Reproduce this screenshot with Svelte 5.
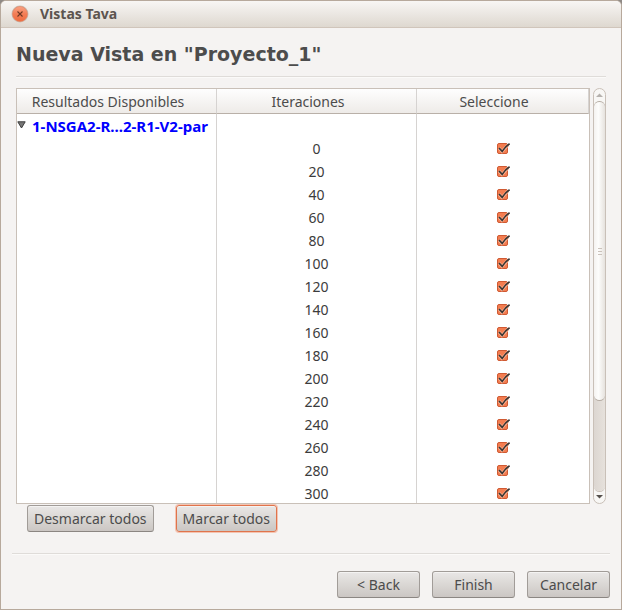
<script>
  let rows = $state(
    Array.from({ length: 16 }, (_, i) => ({ iteration: i * 20, selected: true }))
  );
  let expanded = $state(true);

  function setAll(value) {
    for (const row of rows) row.selected = value;
  }
</script>

<div class="window">
  <header class="titlebar">
    <button class="close" aria-label="Cerrar">
      <svg width="18" height="18" viewBox="0 0 18 18" aria-hidden="true">
        <defs>
          <linearGradient id="close-fill" x1="0" y1="0" x2="0" y2="1">
            <stop offset="0" stop-color="#f9a384" />
            <stop offset="0.5" stop-color="#f37d55" />
            <stop offset="1" stop-color="#ee6c40" />
          </linearGradient>
        </defs>
        <circle cx="9" cy="9" r="8.5" fill="#c9bfb4" />
        <circle cx="9" cy="9" r="7.5" fill="url(#close-fill)" stroke="#e58260" stroke-width="0.6" />
        <path d="M6.5 6.5 L11.5 11.5 M11.5 6.5 L6.5 11.5" stroke="#6e3824" stroke-width="1.1" />
      </svg>
    </button>
    <span class="caption">Vistas Tava</span>
  </header>

  <main>
    <h1>Nueva Vista en "Proyecto_1"</h1>
    <hr />

    <div class="results">
      <div class="viewport">
        <table>
          <colgroup>
            <col class="wide" />
            <col class="wide" />
            <col />
          </colgroup>
          <thead>
            <tr>
              <th scope="col">Resultados Disponibles</th>
              <th scope="col">Iteraciones</th>
              <th scope="col">Seleccione</th>
            </tr>
          </thead>
          <tbody>
            <tr>
              <td class="group">
                <button class="toggle" aria-expanded={expanded} onclick={() => (expanded = !expanded)}>
                  <svg class="arrow" width="9" height="8" viewBox="0 0 9 8" aria-hidden="true">
                    <path d="M0.8 0.8 H8.2 L4.5 7 Z" fill="#777" stroke="#3c3c3c" stroke-width="1" />
                  </svg>
                  <span>1-NSGA2-R...2-R1-V2-par</span>
                </button>
              </td>
              <td></td>
              <td></td>
            </tr>
            {#if expanded}
              {#each rows as row (row.iteration)}
                <tr>
                  <td></td>
                  <td>{row.iteration}</td>
                  <td>
                    <label class="check">
                      <input type="checkbox" bind:checked={row.selected} aria-label={`Iteración ${row.iteration}`} />
                      {#if row.selected}
                        <svg width="14" height="12" viewBox="0 0 14 12" aria-hidden="true">
                          <path d="M2 5 L5 8.4 L11 2" fill="none" stroke="#f9b396" stroke-width="3" />
                          <path d="M2 5 L5.2 8.4 C7 5.6 9.4 2.8 12.6 0.8" fill="none" stroke="#3a3532" stroke-width="1.7" />
                        </svg>
                      {/if}
                    </label>
                  </td>
                </tr>
              {/each}
            {/if}
          </tbody>
        </table>
      </div>

      <div class="scrollbar">
        <button class="step" aria-label="Subir">
          <svg width="7" height="4" viewBox="0 0 7 4" aria-hidden="true"><path d="M0 4 L3.5 0.5 L7 4 Z" fill="#b5b1ad" /></svg>
        </button>
        <div class="track">
          <div class="thumb"><i></i><i></i><i></i></div>
        </div>
        <button class="step down" aria-label="Bajar">
          <svg width="7" height="4" viewBox="0 0 7 4" aria-hidden="true"><path d="M0 0 H7 L3.5 3.5 Z" fill="#55504c" /></svg>
        </button>
      </div>
    </div>

    <div class="marks">
      <button class="btn" onclick={() => setAll(false)}>Desmarcar todos</button>
      <button class="btn active" onclick={() => setAll(true)}>Marcar todos</button>
    </div>
  </main>

  <footer>
    <hr />
    <div class="actions">
      <button class="btn">&lt; Back</button>
      <button class="btn">Finish</button>
      <button class="btn">Cancelar</button>
    </div>
  </footer>
</div>

<style>
  :global(body) {
    margin: 0;
    background: #8f8a86;
  }

  .window {
    box-sizing: border-box;
    height: 100vh;
    display: flex;
    flex-direction: column;
    border: 1px solid #b7a99c;
    border-radius: 6px 6px 0 0;
    overflow: hidden;
    background: #f5f3f2;
    color: #4c4c4c;
    font: 14px/20px "Noto Sans", "Open Sans", sans-serif;
  }

  button {
    font: inherit;
    color: inherit;
  }

  .titlebar {
    height: 26px;
    flex: none;
    display: flex;
    align-items: center;
    gap: 11px;
    padding-left: 10px;
    border-bottom: 1px solid #d0c5bb;
    background: linear-gradient(#f8f6f4, #ded8d0);
  }

  .close {
    display: flex;
    padding: 0;
    border: 0;
    background: none;
  }

  .caption {
    font-weight: 700;
    color: #5c544f;
  }

  main {
    flex: 1;
    min-height: 0;
    display: flex;
    flex-direction: column;
    padding: 0 15px;
  }

  h1 {
    margin: 14px 0 10px;
    font: 700 19px/24px "DejaVu Sans", sans-serif;
  }

  hr {
    width: 100%;
    flex: none;
    margin: 0;
    border: 0;
    border-top: 1px solid #dfdcd9;
    border-bottom: 1px solid #fbfaf9;
  }

  .results {
    flex: 1;
    min-height: 0;
    display: flex;
    gap: 3px;
    margin-top: 10px;
  }

  .viewport {
    flex: 1;
    overflow: hidden;
    border: 1px solid #c9c0b8;
    background: #fff;
  }

  table {
    width: 100%;
    table-layout: fixed;
    border-collapse: separate;
    border-spacing: 0;
  }

  .wide {
    width: 200px;
  }

  th,
  td {
    box-sizing: border-box;
    padding: 0;
    text-align: center;
    border-right: 1px solid #d6d3d1;
  }

  td:last-child {
    border-right: 0;
  }

  th {
    height: 25px;
    padding: 2px 17px 0 0;
    font-weight: 400;
    border-bottom: 1px solid #b9b0a8;
    background: linear-gradient(#fefefe, #eeebe8);
  }

  td {
    height: 23px;
    color: #3c3c3c;
  }

  .toggle {
    display: flex;
    gap: 6px;
    padding: 0;
    border: 0;
    background: none;
    color: #0000ff;
    font-size: 15px;
    font-weight: 700;
    white-space: nowrap;
  }

  .arrow {
    margin-top: 5px;
  }

  .check {
    display: grid;
    justify-content: center;
    justify-items: start;
    grid-template-columns: 12px;
  }

  .check input,
  .check svg {
    grid-area: 1 / 1;
  }

  .check input {
    appearance: none;
    width: 11px;
    height: 11px;
    margin: 0;
    border: 1px solid #b9a99e;
    border-radius: 2px;
    background: #fff;
  }

  .check input:checked {
    border-color: #cf5a33;
    background: #f37d50;
  }

  .check svg {
    pointer-events: none;
  }

  .scrollbar {
    box-sizing: border-box;
    width: 13px;
    display: flex;
    flex-direction: column;
    border: 1px solid #c9c0b8;
    border-radius: 7px;
    overflow: hidden;
    background: #f8f7f5;
  }

  .step {
    height: 12px;
    flex: none;
    display: flex;
    align-items: center;
    justify-content: center;
    padding: 0;
    border: 0;
    background: none;
  }

  .track {
    flex: 1;
    border-radius: 6px;
    background: linear-gradient(90deg, #dcd6d1, #e6e1dc);
    box-shadow: 0 1px 0 #c9c0b8;
  }

  .thumb {
    box-sizing: border-box;
    height: 77%;
    display: flex;
    flex-direction: column;
    align-items: center;
    justify-content: center;
    gap: 2px;
    border: solid #b5aca4;
    border-width: 1px 0;
    border-radius: 6px;
    background: linear-gradient(90deg, #f4f2f0, #fdfdfc 40%, #e6e2de);
  }

  .thumb i {
    width: 4px;
    height: 1px;
    background: #cbc2bb;
  }

  .marks {
    display: flex;
    gap: 22px;
    padding: 1px 11px 0;
  }

  .btn {
    box-sizing: border-box;
    height: 27px;
    padding: 0 6px;
    border: 1px solid #a19c98;
    border-bottom-color: #8b8682;
    border-radius: 3px;
    background: linear-gradient(#e9e7e6, #dad7d4 50%, #cbc6c3);
    box-shadow: inset 0 1px 0 #f4f3f2;
    white-space: nowrap;
  }

  .btn.active {
    border-color: #e0744c;
    box-shadow: 0 0 0 1px #f4c4b2, inset 0 1px 0 #f4f3f2;
  }

  footer {
    padding: 21px 11px 11px;
  }

  .actions {
    display: flex;
    justify-content: flex-end;
    gap: 12px;
    padding-top: 16px;
  }

  .actions .btn {
    width: 83px;
  }
</style>
